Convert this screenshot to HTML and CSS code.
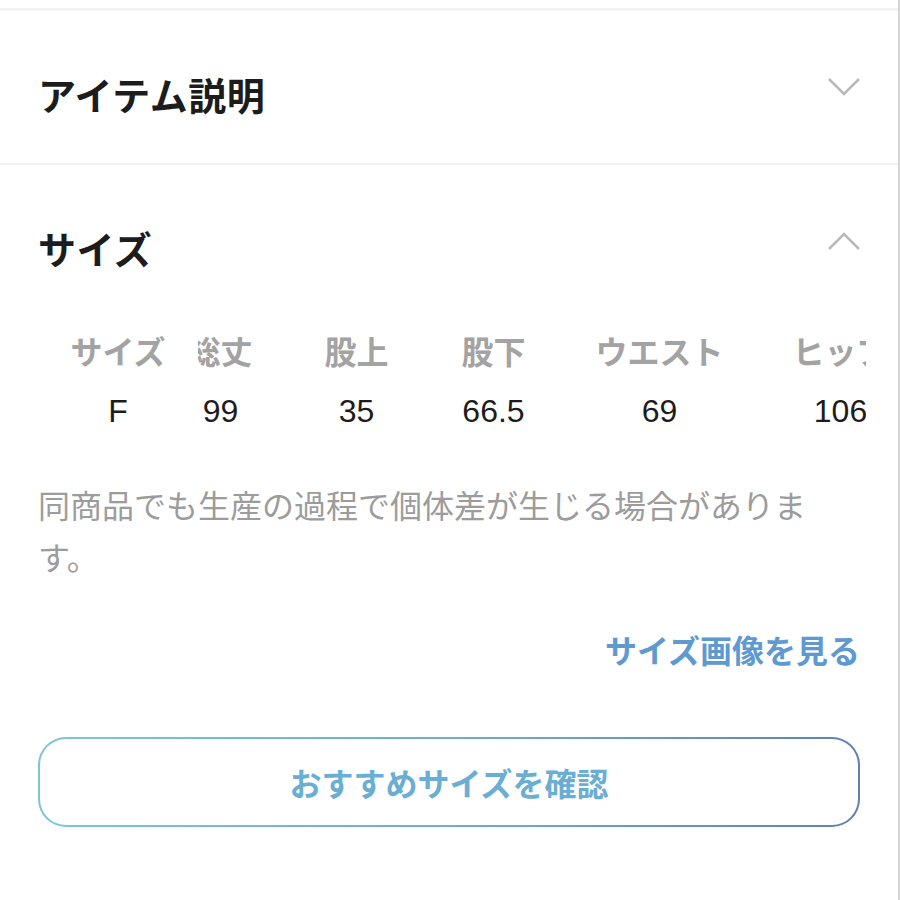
FILE: index.html
```html
<!DOCTYPE html>
<html lang="ja">

<head>
    <meta charset="UTF-8">
    <title>サイズ</title>
    <link rel="stylesheet" href="styles.css">
</head>

<body>
    <div class="page">
        <div class="topbar"></div>

        <!-- アイテム説明 -->
        <div class="section item">
            <div class="sec_head">
                <h2 class="sec_title">アイテム説明</h2>
                <svg class="chevron" width="34" height="20" viewBox="0 0 34 20">
                    <polyline points="2,2 17,17 32,2" fill="none" stroke="#b9b9b9" stroke-width="2.6" />
                </svg>
            </div>
        </div>

        <!-- サイズ -->
        <div class="section size">
            <div class="sec_head">
                <h2 class="sec_title">サイズ</h2>
                <svg class="chevron" width="34" height="20" viewBox="0 0 34 20">
                    <polyline points="2,18 17,3 32,18" fill="none" stroke="#b9b9b9" stroke-width="2.6" />
                </svg>
            </div>

            <div class="size_table">
                <div class="col fixed">
                    <div class="th">サイズ</div>
                    <div class="td">F</div>
                </div>
                <div class="scroll">
                    <div class="track">
                        <div class="col c_total">
                            <div class="th">総丈</div>
                            <div class="td">99</div>
                        </div>
                        <div class="col c_rise">
                            <div class="th">股上</div>
                            <div class="td">35</div>
                        </div>
                        <div class="col c_inseam">
                            <div class="th">股下</div>
                            <div class="td">66.5</div>
                        </div>
                        <div class="col c_waist">
                            <div class="th">ウエスト</div>
                            <div class="td">69</div>
                        </div>
                        <div class="col c_hip">
                            <div class="th">ヒップ</div>
                            <div class="td">106</div>
                        </div>
                    </div>
                </div>
            </div>

            <p class="note">同商品でも生産の過程で個体差が生じる場合がありま<br>す。</p>

            <div class="link_row">
                <a class="size_link" href="#">サイズ画像を見る</a>
            </div>

            <a class="btn_recommend" href="#">おすすめサイズを確認</a>
        </div>
    </div>
</body>

</html>
```

FILE: styles.css
```css
html,
body,
div,
h2,
p,
a {
    margin: 0;
    padding: 0;
}

body {
    background: #fff;
    font-family: "Noto Sans CJK JP", "Liberation Sans", sans-serif;
}

.page {
    width: 898px;
    height: 900px;
    border-right: 2px solid #d4d4d4;
    overflow: hidden;
}

.topbar {
    height: 8px;
    border-bottom: 3px solid #f3f3f3;
}

.section {
    padding: 0 38px;
}

.item {
    padding-top: 63px;
    padding-bottom: 49px;
    border-bottom: 2px solid #f1f1f1;
}

.size {
    padding-top: 63px;
}

.sec_head {
    display: flex;
    justify-content: space-between;
    align-items: flex-start;
}

.sec_title {
    font-size: 38px;
    font-weight: 700;
    line-height: 40px;
    color: #1c1c1c;
    letter-spacing: 0.5px;
}

.chevron {
    margin-top: 3px;
    margin-right: -1px;
}

/* サイズ表 */
.size_table {
    display: flex;
    margin-top: 52px;
    margin-right: -6px;
}

.col {
    display: flex;
    flex-direction: column;
    align-items: center;
    flex-shrink: 0;
}

.col.fixed {
    width: 160px;
    background: #fff;
}

.c_total {
    width: 135px;
}

.c_rise,
.c_inseam {
    width: 137px;
}

.c_waist {
    width: 195px;
}

.c_hip {
    width: 167px;
}

.th {
    height: 60px;
    line-height: 60px;
    font-size: 32px;
    font-weight: 700;
    color: #a3a3a3;
    white-space: nowrap;
}

.td {
    height: 62px;
    line-height: 62px;
    font-family: "Liberation Sans", "Noto Sans CJK JP", sans-serif;
    font-size: 32px;
    color: #1c1c1c;
}

.scroll {
    flex: 1;
    overflow: hidden;
}

.track {
    display: flex;
    margin-left: -45px;
}

.note {
    margin-top: 36px;
    font-size: 32px;
    line-height: 52px;
    color: #9c9c9c;
}

.link_row {
    display: flex;
    justify-content: flex-end;
    margin-top: 47px;
}

.size_link {
    font-size: 32px;
    font-weight: 700;
    line-height: 40px;
    color: #5e99d0;
    text-decoration: none;
}

.btn_recommend {
    display: flex;
    align-items: center;
    justify-content: center;
    height: 86px;
    margin-top: 68px;
    border: 2px solid transparent;
    border-radius: 28px;
    background: linear-gradient(#fff, #fff) padding-box,
        linear-gradient(90deg, #7fc4da, #6ea6cc 60%, #5f80b6) border-box;
    font-size: 32px;
    font-weight: 700;
    color: #6aaed4;
    text-decoration: none;
}
```
